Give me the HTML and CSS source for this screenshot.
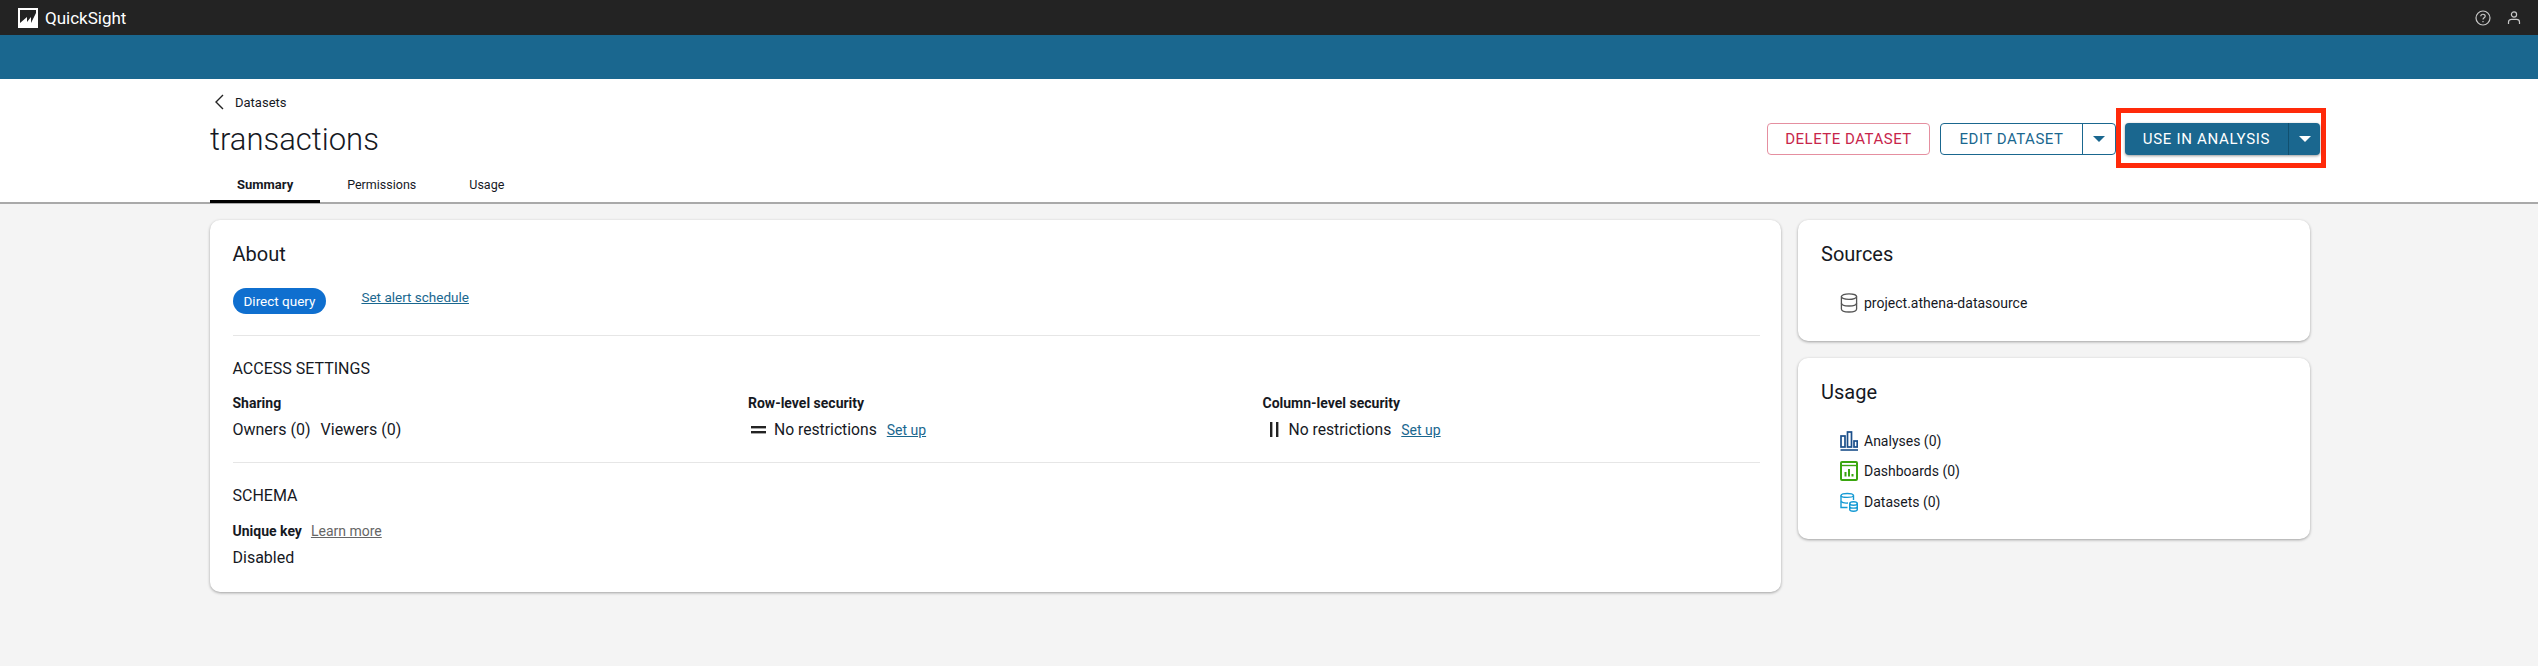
FILE: index.html
```html
<!DOCTYPE html>
<html lang="en">

<head>
    <meta charset="utf-8">
    <title>transactions</title>
    <link rel="stylesheet" href="styles.css">
</head>

<body>
    <nav class="topbar">
        <div class="brand">
            <svg class="brand-logo" width="20" height="20" viewBox="0 0 20 20">
                <rect width="20" height="20" fill="#fff" />
                <path d="M2 2H18V5L13 15V9L9 14V9L2 15Z" fill="#232323" />
            </svg>
            <span>QuickSight</span>
        </div>
        <div class="topbar-icons">
            <svg width="16" height="16" viewBox="0 0 16 16" fill="none" stroke="#c8c8c8" stroke-width="1.2">
                <circle cx="8" cy="8" r="7" />
                <path d="M5.8 6.3C5.8 3.6 10.2 3.6 10.2 6.2C10.2 7.8 8 7.8 8 9.6" />
                <path d="M8 11V12.2" />
            </svg>
            <svg width="14" height="14" viewBox="0 0 14 14" fill="none" stroke="#c8c8c8" stroke-width="1.2">
                <circle cx="7" cy="3.5" r="2.6" />
                <path d="M1.5 13V11C1.5 9.3 3 8.3 4.5 8.3H9.5C11 8.3 12.5 9.3 12.5 11V13" />
            </svg>
        </div>
    </nav>
    <div class="banner"></div>

    <header class="page-header">
        <div class="page-title">
            <a class="back" href="#">
                <svg width="10" height="16" viewBox="0 0 10 16" fill="none" stroke="#232323" stroke-width="1.4">
                    <path d="M9 1L2 8L9 15" />
                </svg>
                <span>Datasets</span>
            </a>
            <h1>transactions</h1>
            <div class="tabs">
                <a class="tab active" href="#">Summary</a>
                <a class="tab" href="#">Permissions</a>
                <a class="tab" href="#">Usage</a>
            </div>
        </div>
        <div class="actions">
            <button class="btn btn-delete">DELETE DATASET</button>
            <div class="split split-outline">
                <button class="btn btn-edit">EDIT DATASET</button>
                <button class="caret-btn"><i class="caret"></i></button>
            </div>
            <div class="highlight">
                <div class="split split-solid">
                    <button class="btn btn-use">USE IN ANALYSIS</button>
                    <button class="caret-btn"><i class="caret"></i></button>
                </div>
            </div>
        </div>
    </header>

    <main class="content">
        <section class="card about">
            <h2>About</h2>
            <div class="about-row">
                <span class="chip">Direct query</span>
                <a class="link alert-link" href="#">Set alert schedule</a>
            </div>
            <hr>
            <h3>ACCESS SETTINGS</h3>
            <div class="access">
                <div>
                    <h4>Sharing</h4>
                    <p class="value"><span>Owners (0)</span><span>Viewers (0)</span></p>
                </div>
                <div>
                    <h4>Row-level security</h4>
                    <p class="value rule">
                        <svg class="rule-icon" width="16" height="16" viewBox="0 0 16 16" fill="#232323">
                            <rect y="4" width="15" height="2.4" />
                            <rect y="9" width="15" height="2.4" />
                        </svg>
                        <span>No restrictions</span>
                        <a class="link" href="#">Set up</a>
                    </p>
                </div>
                <div>
                    <h4>Column-level security</h4>
                    <p class="value rule">
                        <svg class="rule-icon col-icon" width="9" height="16" viewBox="0 0 9 16" fill="#232323">
                            <rect width="2.4" height="15" />
                            <rect x="6" width="2.4" height="15" />
                        </svg>
                        <span>No restrictions</span>
                        <a class="link" href="#">Set up</a>
                    </p>
                </div>
            </div>
            <hr>
            <h3>SCHEMA</h3>
            <div class="key-row">
                <h4>Unique key</h4>
                <a class="learn" href="#">Learn more</a>
            </div>
            <p class="value">Disabled</p>
        </section>

        <aside class="side">
            <section class="card">
                <h2>Sources</h2>
                <ul class="items">
                    <li>
                        <svg width="18" height="20" viewBox="0 0 18 20" fill="none" stroke="#555" stroke-width="1.3">
                            <ellipse cx="9" cy="3.6" rx="7.6" ry="2.8" />
                            <path d="M1.4 3.6V16C1.4 17.8 4.8 19 9 19S16.6 17.8 16.6 16V3.6" />
                            <path d="M1.4 10C1.4 11.8 4.8 13 9 13S16.6 11.8 16.6 10" />
                        </svg>
                        <span>project.athena-datasource</span>
                    </li>
                </ul>
            </section>
            <section class="card">
                <h2>Usage</h2>
                <ul class="items">
                    <li>
                        <svg width="18" height="20" viewBox="0 0 18 20" fill="none" stroke="#1b4f8a" stroke-width="1.7">
                            <rect x="1" y="5" width="4" height="11" />
                            <rect x="7.5" y="1" width="4" height="15" />
                            <rect x="14" y="10" width="3.2" height="6" />
                            <path d="M0.5 19H18" stroke-width="1.6" />
                        </svg>
                        <span>Analyses (0)</span>
                    </li>
                    <li>
                        <svg width="18" height="20" viewBox="0 0 18 20" fill="none" stroke="#3aa60f" stroke-width="2">
                            <rect x="1" y="1" width="16" height="18" rx="1" />
                            <path d="M1 4.5H17" stroke-width="1.4" />
                            <path d="M5.5 15.5V11M9 15.5V8M12.5 15.5V13" />
                        </svg>
                        <span>Dashboards (0)</span>
                    </li>
                    <li>
                        <svg width="18" height="20" viewBox="0 0 18 20" fill="none" stroke="#159ad4" stroke-width="1.4">
                            <path d="M7.5 15.5H1V3.5C1 0.8 13.5 0.8 13.5 3.5V8" />
                            <path d="M1 3.5C1 6 13.5 6 13.5 3.5" />
                            <path d="M1 9.5C2.5 11 6 11.2 8 11" />
                            <ellipse cx="13.5" cy="11.5" rx="3.8" ry="1.8" />
                            <path d="M9.7 11.5V17.5C9.7 19.8 17.3 19.8 17.3 17.5V11.5M9.7 14.5C9.7 16.6 17.3 16.6 17.3 14.5" />
                        </svg>
                        <span>Datasets (0)</span>
                    </li>
                </ul>
            </section>
        </aside>
    </main>
</body>

</html>
```

FILE: styles.css
```css
* {
    box-sizing: border-box;
}

body {
    margin: 0;
    min-height: 666px;
    background-color: #f4f4f4;
    color: #16191f;
    font-family: Roboto, "Liberation Sans", sans-serif;
}

h1,
h2,
h3,
h4,
p,
ul {
    margin: 0;
    padding: 0;
}

a {
    color: inherit;
    text-decoration: none;
}

/* top bars */

.topbar {
    display: flex;
    justify-content: space-between;
    align-items: center;
    height: 35px;
    padding: 0 17px 0 18px;
    background-color: #232323;
}

.brand {
    display: flex;
    align-items: center;
    gap: 7px;
    color: #fff;
    font-size: 17px;
}

.topbar-icons {
    display: flex;
    align-items: center;
    gap: 16px;
}

.banner {
    height: 44px;
    background-color: #1a678f;
}

/* page header */

.page-header {
    display: flex;
    justify-content: space-between;
    height: 125px;
    padding: 0 212px 0 210px;
    background-color: #fff;
    border-bottom: 2px solid #a9a9a9;
}

.back {
    display: flex;
    align-items: center;
    gap: 11px;
    height: 18px;
    margin: 14px 0 0 4px;
    font-size: 13px;
}

h1 {
    margin-top: 9px;
    font-size: 31px;
    font-weight: 300;
    line-height: 40px;
}

.tabs {
    display: flex;
    margin-top: 10px;
}

.tab {
    height: 33px;
    padding: 7px 26px 0 27px;
    font-size: 12.5px;
}

.tab.active {
    padding-right: 27px;
    font-size: 13px;
    font-weight: 700;
    border-bottom: 3px solid #000;
}

.actions {
    display: flex;
    align-items: flex-start;
    gap: 10px;
    margin-top: 29px;
}

.btn {
    height: 32px;
    background: none;
    border: none;
    font-family: inherit;
    font-size: 15px;
    letter-spacing: 0.5px;
}

.btn-delete {
    width: 163px;
    margin-top: 15px;
    color: #c7254b;
    border: 1px solid #e58fa0;
    border-radius: 4px;
}

.split {
    display: flex;
    height: 32px;
    border-radius: 4px;
}

.split-outline {
    margin-top: 15px;
    border: 1px solid #1a678f;
}

.btn-edit {
    width: 141px;
    height: 30px;
    color: #1a678f;
}

.split-outline .caret-btn {
    width: 33px;
    border-left: 1px solid #1a678f;
}

.caret-btn {
    display: flex;
    justify-content: center;
    align-items: center;
    background: none;
    border: none;
    padding: 0;
}

.caret {
    width: 0;
    height: 0;
    border-left: 6px solid transparent;
    border-right: 6px solid transparent;
    border-top: 6px solid #1a678f;
}

.highlight {
    margin-left: -10px;
    padding: 10px 1px 8px 4px;
    border: 5px solid #ff2a0a;
}

.split-solid {
    background-color: #1a678f;
    box-shadow: 0 1px 3px rgba(0, 0, 0, 0.4);
}

.btn-use {
    width: 163px;
    color: #fff;
    letter-spacing: 0.7px;
}

.split-solid .caret-btn {
    width: 32px;
    border-left: 1px solid #11506f;
}

.split-solid .caret {
    border-top-color: #fff;
}

/* cards */

.content {
    display: grid;
    grid-template-columns: 1571px 512px;
    gap: 17px;
    align-items: start;
    padding: 16px 210px;
}

.side {
    display: flex;
    flex-direction: column;
    gap: 17px;
}

.card {
    padding: 22px 23px;
    background-color: #fff;
    border-radius: 10px;
    box-shadow: 0 1px 3px rgba(0, 0, 0, 0.35);
}

.about {
    height: 372px;
    padding-left: 22.5px;
    padding-right: 21px;
}

h2 {
    font-size: 20px;
    font-weight: 400;
    line-height: 24px;
}

h3 {
    font-size: 16px;
    font-weight: 400;
    line-height: 20px;
}

h4 {
    font-size: 14px;
    font-weight: 700;
    line-height: 18px;
}

hr {
    margin: 0;
    border: none;
    border-top: 1px solid #e6e6e6;
}

.about-row {
    display: flex;
    align-items: flex-start;
    gap: 35px;
    height: 47px;
    margin-top: 22px;
}

.chip {
    height: 26px;
    padding: 0 11px;
    background-color: #0f6fcf;
    color: #fff;
    border-radius: 13px;
    font-size: 13.5px;
    line-height: 26px;
}

.link {
    color: #1a678f;
    font-size: 14px;
    text-decoration: underline;
}

.alert-link {
    font-size: 13.5px;
    line-height: 18px;
}

.about hr + h3 {
    margin-top: 23px;
}

.access {
    display: grid;
    grid-template-columns: 515.5px 514.5px 1fr;
    height: 68px;
    margin-top: 15px;
}

.value {
    display: flex;
    align-items: center;
    gap: 10px;
    margin-top: 7.5px;
    font-size: 16px;
    line-height: 20px;
}

.rule {
    font-size: 15.7px;
}

.rule-icon {
    flex-shrink: 0;
    margin-left: 3px;
    margin-right: -3px;
}

.col-icon {
    margin-left: 7px;
    margin-right: 0;
}

.key-row {
    display: flex;
    align-items: center;
    gap: 9px;
    margin-top: 16px;
}

.learn {
    color: #666;
    font-size: 14px;
    text-decoration: underline;
}

.items {
    margin-top: 22px;
    padding-left: 19px;
    list-style: none;
}

.items li {
    display: flex;
    align-items: center;
    gap: 6px;
    height: 30.5px;
    font-size: 14px;
}
```
